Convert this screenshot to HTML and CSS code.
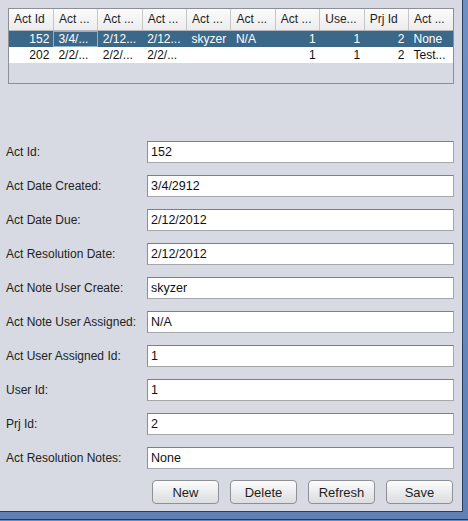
FILE: index.html
```html
<!DOCTYPE html>
<html>
<head>
<meta charset="utf-8">
<link rel="stylesheet" href="styles.css">
</head>
<body>
<div class="outer">
  <div class="frame">
    <div class="table-pane">
      <table class="grid">
        <thead>
          <tr>
            <th>Act Id</th><th>Act ...</th><th>Act ...</th><th>Act ...</th><th>Act ...</th>
            <th>Act ...</th><th>Act ...</th><th>Use...</th><th>Prj Id</th><th>Act ...</th>
          </tr>
        </thead>
        <tbody>
          <tr class="sel">
            <td class="num">152</td><td class="focus">3/4/...</td><td>2/12...</td><td>2/12...</td><td>skyzer</td>
            <td>N/A</td><td class="num">1</td><td class="num">1</td><td class="num">2</td><td>None</td>
          </tr>
          <tr>
            <td class="num">202</td><td>2/2/...</td><td>2/2/...</td><td>2/2/...</td><td></td>
            <td></td><td class="num">1</td><td class="num">1</td><td class="num">2</td><td>Test...</td>
          </tr>
        </tbody>
      </table>
    </div>

    <div class="form">
      <div class="row"><span class="lbl">Act Id:</span><div class="field">152</div></div>
      <div class="row"><span class="lbl">Act Date Created:</span><div class="field">3/4/2912</div></div>
      <div class="row"><span class="lbl">Act Date Due:</span><div class="field">2/12/2012</div></div>
      <div class="row"><span class="lbl">Act Resolution Date:</span><div class="field">2/12/2012</div></div>
      <div class="row"><span class="lbl">Act Note User Create:</span><div class="field">skyzer</div></div>
      <div class="row"><span class="lbl">Act Note User Assigned:</span><div class="field">N/A</div></div>
      <div class="row"><span class="lbl">Act User Assigned Id:</span><div class="field">1</div></div>
      <div class="row"><span class="lbl">User Id:</span><div class="field">1</div></div>
      <div class="row"><span class="lbl">Prj Id:</span><div class="field">2</div></div>
      <div class="row"><span class="lbl">Act Resolution Notes:</span><div class="field">None</div></div>
    </div>

    <div class="buttons">
      <button class="btn">New</button>
      <button class="btn">Delete</button>
      <button class="btn">Refresh</button>
      <button class="btn">Save</button>
    </div>
  </div>
</div>
</body>
</html>
```

FILE: styles.css
```css
html, body {
  margin: 0;
  padding: 0;
}
body {
  width: 468px;
  height: 521px;
  overflow: hidden;
  font-family: "Liberation Sans", Arial, sans-serif;
  font-size: 12px;
  color: #1e1e1e;
  background: #6b8cc0;
}
.outer {
  width: 468px;
  height: 520px;
  border-bottom: 1px solid #24385a;
  box-sizing: border-box;
  background: linear-gradient(#6f90c3, #5f80b4);
}
.frame {
  width: 463px;
  height: 512px;
  box-sizing: border-box;
  background: #d7dae2;
  border-right: 1px solid #2a3d5c;
  border-bottom: 1px solid #2a3d5c;
  padding: 8px 0 0 0;
}
.table-pane {
  margin-left: 8px;
  width: 446px;
  height: 76px;
  box-sizing: border-box;
  border: 1px solid #8c8f96;
  background: #d7dae2;
}
.grid {
  width: 100%;
  border-collapse: collapse;
  table-layout: fixed;
}
.grid th {
  height: 21px;
  padding: 0 0 0 5px;
  font-weight: normal;
  text-align: left;
  color: #1e1e1e;
  background: linear-gradient(#fbfbfb, #ececee);
  border-right: 1px solid #c4c6ca;
  border-bottom: 1px solid #b4b6bb;
  white-space: nowrap;
  overflow: hidden;
  box-sizing: border-box;
}
.grid th:last-child {
  border-right: none;
}
.grid td {
  height: 16px;
  padding: 0 4px 0 5px;
  white-space: nowrap;
  overflow: hidden;
  background: #ffffff;
  color: #111;
  box-sizing: border-box;
}
.grid td.num {
  text-align: right;
  padding-right: 4px;
}
.grid tr.sel td {
  height: 17px;
  background: #3b6789;
  color: #ffffff;
}
.grid tr.sel td.focus {
  box-shadow: inset 0 0 0 1px #8fb0cc;
}
.form {
  margin-top: 57px;
  display: flex;
  flex-direction: column;
  gap: 12px;
}
.row {
  display: flex;
  align-items: center;
  height: 22px;
}
.lbl {
  width: 141px;
  padding-left: 6px;
  font-size: 12px;
  color: #222;
}
.field {
  width: 307px;
  height: 22px;
  box-sizing: border-box;
  background: #ffffff;
  border: 1px solid #a5a7ab;
  border-top-color: #7d7f84;
  border-left-color: #8d8f94;
  padding: 3px 0 0 3px;
  font-size: 12.5px;
  color: #111;
}
.buttons {
  margin-top: 11px;
  display: flex;
  gap: 11px;
  padding-left: 152px;
}
.btn {
  width: 67px;
  height: 24px;
  padding: 0;
  margin: 0;
  border: 1px solid #8e9095;
  border-radius: 4px;
  background: linear-gradient(#fdfdfd, #e9eaec 55%, #dcdde0);
  font-family: "Liberation Sans", Arial, sans-serif;
  font-size: 13px;
  color: #1e1e1e;
}
```
